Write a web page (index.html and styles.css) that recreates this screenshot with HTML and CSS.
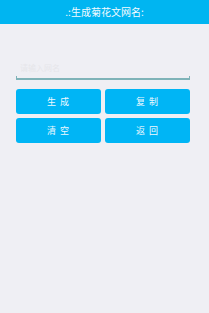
FILE: index.html
```html
<!DOCTYPE html>
<html lang="zh">
<head>
   <meta charset="UTF-8">
   <meta name="viewport" content="width=device-width, initial-scale=1.0">
   <title>生成菊花文网名</title>
   <link rel="stylesheet" href="styles.css">
</head>
<body>
   <div class="title-bar">.:生成菊花文网名:</div>

   <div class="content">
      <div class="field">
         <input class="name-input" type="text" placeholder="请输入网名">
         <div class="underline"></div>
      </div>

      <div class="buttons">
         <button class="btn">生 成</button>
         <button class="btn">复 制</button>
         <button class="btn">清 空</button>
         <button class="btn">返 回</button>
      </div>
   </div>
</body>
</html>
```

FILE: styles.css
```css
body {
   margin: 0;
   padding: 0;
   background-color: #efeff4;
   font-family: "Noto Sans CJK SC", "Noto Sans", sans-serif;
   height: 100vh;
}

.title-bar {
   height: 24px;
   line-height: 24px;
   background-color: #00b5f1;
   color: #f4fbff;
   font-size: 10px;
   text-align: center;
}

.content {
   padding: 0 19px 0 16px;
}

.field {
   margin-top: 34px;
}

.name-input {
   display: block;
   width: 100%;
   box-sizing: border-box;
   height: 18px;
   border: none;
   background: transparent;
   padding: 0 4px;
   font-family: inherit;
   font-size: 8px;
   outline: none;
}

.name-input::placeholder {
   color: #e6e6ea;
}

/* underline with small ticks at both ends */
.underline {
   height: 2px;
   border: 1px solid #7fb3b8;
   border-top: none;
   border-bottom-width: 2px;
}

.buttons {
   display: grid;
   grid-template-columns: 1fr 1fr;
   gap: 4px;
   margin-top: 9px;
}

.btn {
   height: 25px;
   border: none;
   border-radius: 3px;
   background-color: #00b5f5;
   color: #eef9ff;
   font-family: inherit;
   font-size: 9px;
   letter-spacing: 1px;
   padding: 0;
}
```
